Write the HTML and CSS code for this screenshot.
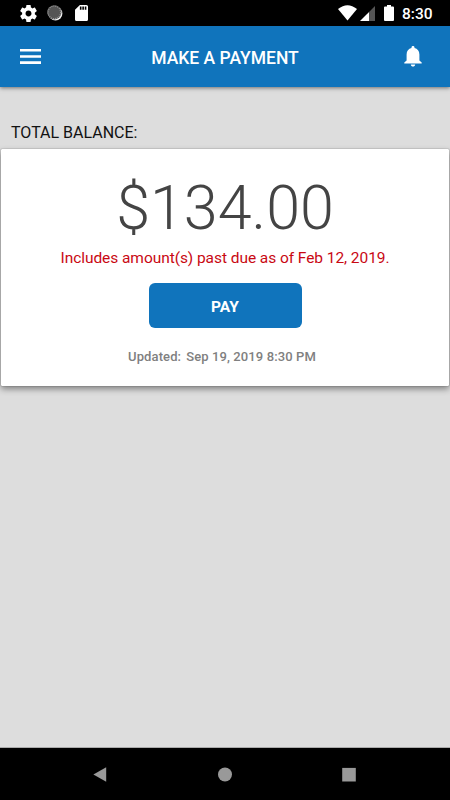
FILE: index.html
```html
<!DOCTYPE html>
<html lang="en">
<head>
<meta charset="utf-8">
<title>Make a Payment</title>
<link rel="stylesheet" href="styles.css">
</head>
<body>
<div class="screen">
  <div class="status-bar">
    <div class="status-left">
      <svg class="gear" viewBox="2 2 20 20"><path d="M19.43 12.98c.04-.32.07-.64.07-.98s-.03-.66-.07-.98l2.11-1.65c.19-.15.24-.42.12-.64l-2-3.46c-.12-.22-.39-.3-.61-.22l-2.49 1c-.52-.4-1.08-.73-1.69-.98l-.38-2.65C14.46 2.18 14.25 2 14 2h-4c-.25 0-.46.18-.49.42l-.38 2.65c-.61.25-1.17.59-1.69.98l-2.49-1c-.23-.09-.49 0-.61.22l-2 3.46c-.13.22-.07.49.12.64l2.11 1.65c-.04.32-.07.65-.07.98s.03.66.07.98l-2.11 1.65c-.19.15-.24.42-.12.64l2 3.46c.12.22.39.3.61.22l2.49-1c.52.4 1.08.73 1.69.98l.38 2.65c.03.24.24.42.49.42h4c.25 0 .46-.18.49-.42l.38-2.65c.61-.25 1.17-.59 1.69-.98l2.49 1c.23.09.49 0 .61-.22l2-3.46c.12-.22.07-.49-.12-.64zM12 15.500c-1.930 0-3.500-1.570-3.500-3.500s1.570-3.500 3.500-3.500 3.500 1.570 3.500 3.500-1.570 3.500-3.500 3.500z"/></svg>
      <svg class="sync" viewBox="0 0 16 16"><circle cx="8.500" cy="8.500" r="6.900" fill="#eee"/><circle cx="7.300" cy="7.300" r="7.100" fill="#555"/><circle cx="7.300" cy="7.300" r="6.300" fill="none" stroke="#999" stroke-width="1.200" stroke-dasharray="1 1"/></svg>
      <svg class="sd" viewBox="4 2 16 20" preserveAspectRatio="none"><path d="M18 2h-8L4.020 8 4 20c0 1.100.9 2 2 2h12c1.100 0 2-.9 2-2V4c0-1.100-.9-2-2-2zm-6 6h-2V4h2v4zm3 0h-2V4h2v4zm3 0h-2V4h2v4z"/></svg>
    </div>
    <div class="status-right">
      <svg class="wifi" viewBox="0 0 19 16"><path d="M9.500 15.500 0 4Q9.500-3.600 19 4Z"/></svg>
      <svg class="signal" viewBox="0 0 15 15"><path d="M0 15 9.300 5.700V15Z"/><path d="M9.300 5.700 15 0v15H9.300Z" fill="#555"/></svg>
      <svg class="battery" viewBox="0 0 10 16"><path d="M3 0h4v1.500h2q1 0 1 1V15q0 1-1 1H1q-1 0-1-1V2.500q0-1 1-1h2Z"/></svg>
      <span class="clock">8:30</span>
    </div>
  </div>
  <header class="app-bar">
    <svg class="menu" viewBox="0 0 21 15"><path d="M0 0h21v2.600H0zM0 6.200h21v2.600H0zM0 12.300h21v2.600H0z"/></svg>
    <h1>MAKE A PAYMENT</h1>
    <svg class="bell" viewBox="0 0 18 21"><path d="M9 0c.9 0 1.500.6 1.500 1.400v.7c3 .7 4.900 3.100 4.900 6.400v6l2.300 2.100v1H.3v-1l2.300-2.100v-6c0-3.300 1.900-5.700 4.900-6.400v-.7C7.500.6 8.100 0 9 0ZM6.800 18.400h4.400C11 19.800 10.200 20.600 9 20.600s-2-.8-2.200-2.200Z"/></svg>
  </header>
  <main>
    <h2>TOTAL BALANCE:</h2>
    <section class="card">
      <div class="amount">$134.00</div>
      <p class="past-due">Includes amount(s) past due as of Feb 12, 2019.</p>
      <button class="pay">PAY</button>
      <p class="updated"><span>Updated:</span><span>Sep 19, 2019 8:30 PM</span></p>
    </section>
  </main>
  <nav class="nav-bar">
    <svg viewBox="0 0 14 15"><path d="M.4 7.500 13.200.2v14.600Z"/></svg>
    <svg viewBox="0 0 14 15"><circle cx="7" cy="7.500" r="7"/></svg>
    <svg viewBox="0 0 14 15"><path d="M.2.900h13.600v13.600H.2Z"/></svg>
  </nav>
</div>
</body>
</html>
```
FILE: styles.css
```css
* { box-sizing: border-box; }
body, h1, h2, p { margin: 0; }
body { font-family: Roboto, "Liberation Sans", sans-serif; background: #ddd; }
svg { display: block; flex: none; fill: #fff; }
.screen { width: 450px; height: 800px; display: flex; flex-direction: column; overflow: hidden; }
.status-bar { height: 26px; background: #000; display: flex; justify-content: space-between; padding: 0 17px 0 20px; }
.status-left, .status-right { display: flex; align-items: center; }
.gear { width: 17px; height: 17px; }
.sync { width: 16px; height: 16px; margin-left: 10px; }
.sd { width: 13px; height: 16px; margin-left: 12px; }
.wifi { width: 19px; height: 16px; }
.signal { width: 15px; height: 15px; margin: 1px 0 0 3px; }
.battery { width: 10px; height: 16px; margin-left: 9px; }
.clock { color: #fff; font-size: 15.500px; font-weight: 500; line-height: 26px; margin: 2px 0 0 8px; width: 31px; white-space: nowrap; }
.app-bar { height: 61px; background: #1074bc; display: flex; align-items: center; justify-content: space-between; padding: 0 28px 0 20px; box-shadow: 0 1px 4px rgba(0,0,0,.5); z-index: 1; }
.menu { width: 21px; height: 15px; }
.app-bar h1 { color: #fff; font-size: 17.500px; font-weight: 500; line-height: 24px; margin: 2px 0 0 5px; }
.bell { width: 18px; height: 21px; }
main { flex: 1; background: #ddd; padding: 36px 1px 0; border-bottom: 1px solid #aaa; }
h2 { font-size: 16px; font-weight: 400; line-height: 20px; margin: 0 0 6px 10px; color: #111; }
.card { height: 237px; background: #fff; border-radius: 1px; box-shadow: 0 3px 6px rgba(0,0,0,.42), 0 0 1px rgba(0,0,0,.7); display: flex; flex-direction: column; align-items: center; }
.amount { font-size: 61px; font-weight: 300; line-height: 70px; color: #444; margin-top: 24px; }
.past-due { font-size: 15.500px; letter-spacing: -.06px; line-height: 20px; color: #c90813; margin-top: 5px; }
.pay { width: 153px; height: 45px; margin-top: 15px; border: 0; border-radius: 6px; padding: 2px 0 0; background: #1074bc; color: #fff; font: 700 15.500px Roboto, sans-serif; }
.updated { display: flex; gap: 5px; margin: 20px 6px 0 0; font-size: 13px; letter-spacing: .11px; line-height: 18px; font-weight: 500; color: #808080; }
.nav-bar { height: 52px; background: #000; display: flex; align-items: center; justify-content: space-between; padding: 0 94px 0 93px; }
.nav-bar svg { width: 14px; height: 15px; fill: #999; }
```
